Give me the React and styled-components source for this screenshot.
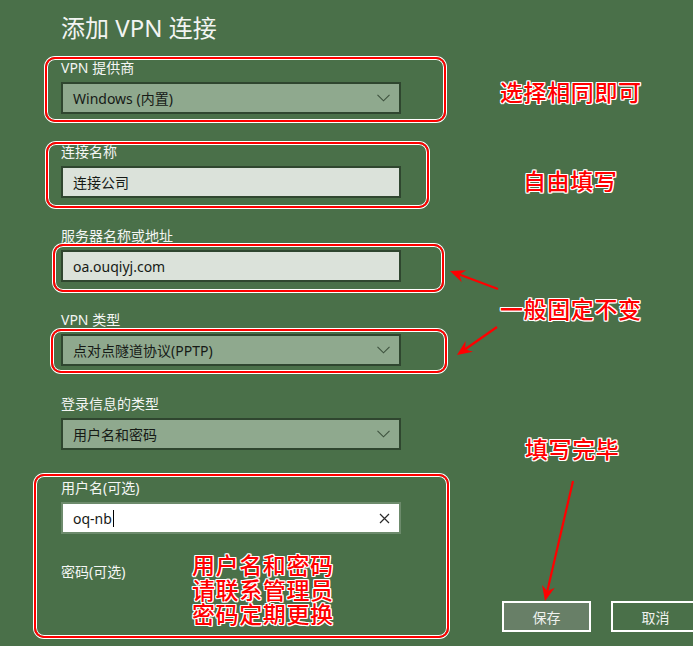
import React from "react";
import styled, { createGlobalStyle, css } from "styled-components";

const GlobalStyle = createGlobalStyle`
  html, body {
    margin: 0;
    padding: 0;
    background: #4a7049;
    overflow: hidden;
  }
  body {
    font-family: "Noto Sans", "Noto Sans CJK SC", sans-serif;
  }
`;

const Page = styled.div`
  position: relative;
  width: 693px;
  height: 646px;
  overflow: hidden;
  background: #4a7049;
  display: grid;
  grid-template-columns: 340px 1fr;
  padding-left: 61px;
  box-sizing: border-box;
  font-family: "Noto Sans", "Noto Sans CJK SC", sans-serif;
`;

const FormColumn = styled.div`
  display: flex;
  flex-direction: column;
  padding-top: 12px;
`;

const Title = styled.h1`
  margin: 0 0 14px;
  font-size: 24px;
  line-height: 32px;
  font-weight: 400;
  color: #f2f4f2;
  white-space: nowrap;
`;

const Field = styled.div`
  display: flex;
  flex-direction: column;
  gap: 4px;
  margin-bottom: 28px;
`;

const Label = styled.div`
  font-size: 14px;
  line-height: 20px;
  color: #f4f6f4;
  white-space: nowrap;
`;

const controlBase = css`
  box-sizing: border-box;
  width: 340px;
  height: 32px;
  display: flex;
  align-items: center;
  justify-content: space-between;
  padding: 0 9px 0 10px;
  font-size: 14px;
  color: #161a16;
  white-space: nowrap;
`;

const Select = styled.div`
  ${controlBase};
  background: #8fa98e;
  border: 2px solid #2f462f;
`;

const TextBox = styled.div`
  ${controlBase};
  background: ${(p) => (p.$focused ? "#ffffff" : "#dbe2da")};
  border: 2px solid ${(p) => (p.$focused ? "#6d8b6c" : "#2f462f")};
`;

const Value = styled.span`
  display: inline-flex;
  align-items: center;
`;

const Caret = styled.span`
  display: inline-block;
  width: 1px;
  height: 17px;
  background: #000;
  margin-left: 1px;
`;

const SideColumn = styled.div`
  display: flex;
  align-items: flex-end;
  padding-left: 101px;
  padding-bottom: 14px;
`;

const ButtonRow = styled.div`
  display: flex;
  gap: 20px;
`;

const Button = styled.div`
  box-sizing: border-box;
  flex: none;
  width: 89px;
  height: 31px;
  display: flex;
  align-items: center;
  justify-content: center;
  border: 2px solid #ffffff;
  background: ${(p) => (p.$primary ? "#687f67" : "transparent")};
  color: #eef1ee;
  font-size: 14px;
`;

const Annotations = styled.div`
  position: absolute;
  inset: 0;
  pointer-events: none;
`;

const Frame = styled.div`
  position: absolute;
  left: ${(p) => p.$x}px;
  top: ${(p) => p.$y}px;
  width: ${(p) => p.$w}px;
  height: ${(p) => p.$h}px;
  box-sizing: border-box;
  border: 2px solid #ff0000;
  border-radius: 10px;
  box-shadow: 0 0 0 1px #ffffff, inset 0 0 0 1px #ffffff;
`;

const Note = styled.div`
  position: absolute;
  left: ${(p) => p.$x}px;
  top: ${(p) => p.$y}px;
  display: flex;
  flex-direction: column;
  font-family: "Noto Sans CJK SC", sans-serif;
  font-size: 23px;
  line-height: 24.5px;
  letter-spacing: 0.6px;
  font-weight: 500;
  color: #ff0000;
  white-space: nowrap;
  text-shadow: 1px 0 #fff, -1px 0 #fff, 0 1px #fff, 0 -1px #fff,
    1px 1px #fff, -1px -1px #fff, 1px -1px #fff, -1px 1px #fff;
`;

const NoteLine = styled.span`
  display: block;
  height: 24.5px;
`;

const ArrowLayer = styled.svg`
  position: absolute;
  left: 0;
  top: 0;
`;

const Chevron = () => (
  <svg width="13" height="8" viewBox="0 0 13 8">
    <polyline points="0.5,0.8 6.5,6.8 12.5,0.8" fill="none" stroke="#3e523e" strokeWidth="1.1" />
  </svg>
);

const ClearIcon = () => (
  <svg width="11" height="11" viewBox="0 0 11 11">
    <path d="M1 1 L10 10 M10 1 L1 10" stroke="#2a2a2a" strokeWidth="1.2" fill="none" />
  </svg>
);

const Arrow = ({ from, to }) => {
  const [x1, y1] = from;
  const [x2, y2] = to;
  const dx = x2 - x1;
  const dy = y2 - y1;
  const len = Math.hypot(dx, dy);
  const ux = dx / len;
  const uy = dy / len;
  const px = -uy;
  const py = ux;
  const L = 15;
  const W = 6.5;
  const N = 10;
  const bx = x2 - ux * L;
  const by = y2 - uy * L;
  const nx = x2 - ux * N;
  const ny = y2 - uy * N;
  const head = `${x2},${y2} ${bx + px * W},${by + py * W} ${nx},${ny} ${bx - px * W},${by - py * W}`;
  return (
    <g>
      <line x1={x1} y1={y1} x2={nx} y2={ny} stroke="#ff0000" strokeWidth="2.2" />
      <polygon points={head} fill="#ff0000" />
    </g>
  );
};

export default function App() {
  return (
    <>
      <GlobalStyle />
      <Page>
        <FormColumn>
          <Title>添加 VPN 连接</Title>
          <Field>
            <Label>VPN 提供商</Label>
            <Select>
              <Value>Windows (内置)</Value>
              <Chevron />
            </Select>
          </Field>
          <Field>
            <Label>连接名称</Label>
            <TextBox>
              <Value>连接公司</Value>
            </TextBox>
          </Field>
          <Field>
            <Label>服务器名称或地址</Label>
            <TextBox>
              <Value>oa.ouqiyj.com</Value>
            </TextBox>
          </Field>
          <Field>
            <Label>VPN 类型</Label>
            <Select>
              <Value>点对点隧道协议(PPTP)</Value>
              <Chevron />
            </Select>
          </Field>
          <Field>
            <Label>登录信息的类型</Label>
            <Select>
              <Value>用户名和密码</Value>
              <Chevron />
            </Select>
          </Field>
          <Field>
            <Label>用户名(可选)</Label>
            <TextBox $focused>
              <Value>
                oq-nb
                <Caret />
              </Value>
              <ClearIcon />
            </TextBox>
          </Field>
          <Field>
            <Label>密码(可选)</Label>
          </Field>
        </FormColumn>
        <SideColumn>
          <ButtonRow>
            <Button $primary>保存</Button>
            <Button>取消</Button>
          </ButtonRow>
        </SideColumn>
        <Annotations>
          <Frame $x={45} $y={57} $w={401} $h={65} />
          <Frame $x={46} $y={142} $w={383} $h={66} />
          <Frame $x={53} $y={244} $w={391} $h={48} />
          <Frame $x={51} $y={329} $w={396} $h={44} />
          <Frame $x={34} $y={474} $w={415} $h={164} />
          <Note $x={500} $y={79}>选择相同即可</Note>
          <Note $x={523} $y={168}>自由填写</Note>
          <Note $x={500} $y={296}>一般固定不变</Note>
          <Note $x={525} $y={436}>填写完毕</Note>
          <Note $x={192} $y={552}>
            <NoteLine>用户名和密码</NoteLine>
            <NoteLine>请联系管理员</NoteLine>
            <NoteLine>密码定期更换</NoteLine>
          </Note>
          <ArrowLayer width="693" height="646" viewBox="0 0 693 646">
            <Arrow from={[498, 289]} to={[450, 271]} />
            <Arrow from={[497, 327]} to={[457, 355]} />
            <Arrow from={[573, 481]} to={[545, 601]} />
          </ArrowLayer>
        </Annotations>
      </Page>
    </>
  );
}
